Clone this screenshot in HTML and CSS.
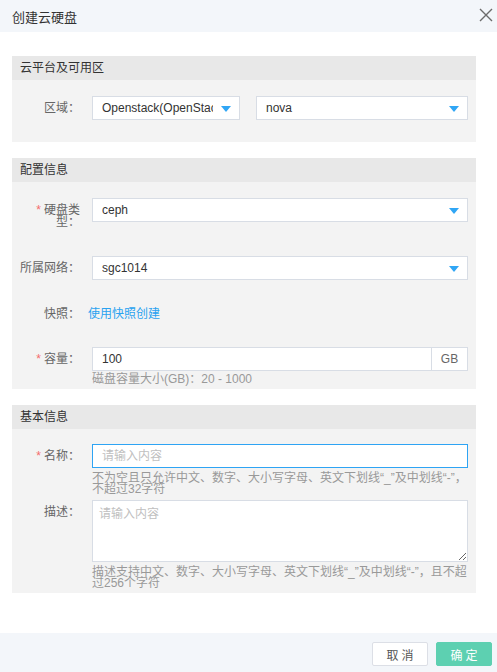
FILE: index.html
```html
<!DOCTYPE html>
<html lang="zh-CN">
<head>
<meta charset="utf-8">
<title>创建云硬盘</title>
<link rel="stylesheet" href="styles.css">
</head>
<body>
<div class="dialog">
  <div class="header">
    <span class="title">创建云硬盘</span>
    <svg class="close" width="14" height="14" viewBox="0 0 14 14"><path d="M1 1 L13 13 M13 1 L1 13" stroke="#6b6b6b" stroke-width="1.4" fill="none"/></svg>
  </div>
  <div class="body">
    <div class="section">
      <div class="sec-title">云平台及可用区</div>
      <div class="sec-body">
        <div class="row">
          <div class="label">区域：</div>
          <div class="select sel-cloud"><span class="sel-text">Openstack(OpenStack)</span><i class="caret"></i></div>
          <div class="select sel-zone"><span class="sel-text">nova</span><i class="caret"></i></div>
        </div>
      </div>
    </div>

    <div class="section">
      <div class="sec-title">配置信息</div>
      <div class="sec-body">
        <div class="row row-type">
          <div class="label"><span class="req">*</span>硬盘类型：</div>
          <div class="select grow"><span class="sel-text">ceph</span><i class="caret"></i></div>
        </div>
        <div class="row row-net">
          <div class="label">所属网络：</div>
          <div class="select grow"><span class="sel-text">sgc1014</span><i class="caret"></i></div>
        </div>
        <div class="row row-snap">
          <div class="label">快照：</div>
          <a class="link">使用快照创建</a>
        </div>
        <div class="row">
          <div class="label"><span class="req">*</span>容量：</div>
          <div class="field">
            <div class="input-group">
              <div class="input">100</div>
              <div class="addon">GB</div>
            </div>
            <div class="help help-cap">磁盘容量大小(GB)：20 - 1000</div>
          </div>
        </div>
      </div>
    </div>

    <div class="section">
      <div class="sec-title">基本信息</div>
      <div class="sec-body sec-basic">
        <div class="row row-name">
          <div class="label"><span class="req">*</span>名称：</div>
          <div class="field">
            <div class="input focus placeholder">请输入内容</div>
            <div class="help">不为空且只允许中文、数字、大小写字母、英文下划线“_”及中划线“-”，不超过32字符</div>
          </div>
        </div>
        <div class="row">
          <div class="label">描述：</div>
          <div class="field">
            <textarea class="textarea" placeholder="请输入内容"></textarea>
            <div class="help">描述支持中文、数字、大小写字母、英文下划线“_”及中划线“-”，且不超过256个字符</div>
          </div>
        </div>
      </div>
    </div>
  </div>
  <div class="footer">
    <button class="btn btn-cancel">取消</button>
    <button class="btn btn-ok">确定</button>
  </div>
</div>
</body>
</html>
```

FILE: styles.css
```css
* { box-sizing: border-box; }
html, body { margin: 0; padding: 0; }
body {
  font-family: "Liberation Sans", "Noto Sans CJK SC", sans-serif;
  font-size: 12px;
  color: #333;
  background: #fff;
}
.dialog {
  width: 497px;
  height: 672px;
  display: flex;
  flex-direction: column;
}
.header {
  height: 32px;
  flex: none;
  background: #f3f6fa;
  display: flex;
  align-items: center;
  justify-content: space-between;
  padding: 0 4px 0 12px;
}
.title { font-size: 13px; color: #333; }
.close { display: block; margin-top: -2px; }
.body {
  flex: 1;
  padding: 24px 21px 0 12px;
}
.section { margin-bottom: 16px; }
.sec-title {
  height: 24px;
  line-height: 24px;
  padding-left: 8px;
  background: #e8e8e8;
  color: #333;
}
.sec-body {
  background: #f3f3f3;
  padding: 16px 8px 22px 8px;
}
.sec-body.sec-basic { padding: 15px 8px 4px 8px; }
.sec-body:has(.help-cap) { padding-bottom: 4px; }
.row {
  display: flex;
  align-items: flex-start;
}
.label {
  width: 60px;
  flex: none;
  text-align: right;
  color: #666;
  line-height: 12px;
  padding-top: 6px;
  margin-right: 12px;
}
.req { color: #f56c6c; margin-right: 3px; }
.select {
  position: relative;
  height: 24px;
  line-height: 22px;
  background: #fff;
  border: 1px solid #d8dde5;
  padding: 0 26px 0 9px;
  color: #333;
  overflow: hidden;
}
.sel-text { display: block; white-space: nowrap; overflow: hidden; }
.caret {
  position: absolute;
  right: 8px;
  top: 9px;
  width: 0;
  height: 0;
  border-left: 5px solid transparent;
  border-right: 5px solid transparent;
  border-top: 6px solid #30a6f5;
}
.sel-cloud { width: 148px; margin-right: 16px; }
.sel-zone { flex: 1; }
.grow { flex: 1; }
.row-type { margin-bottom: 28px; }
.row-net { margin-bottom: 22px; }
.row-snap { margin-bottom: 21px; height: 24px; }
.link {
  color: #2aa2f0;
  line-height: 24px;
  margin-left: -4px;
  cursor: pointer;
}
.field { flex: 1; min-width: 0; }
.input-group { display: flex; }
.input {
  flex: 1;
  height: 24px;
  line-height: 22px;
  background: #fff;
  border: 1px solid #d8dde5;
  padding: 0 9px;
  color: #333;
}
.input.focus { border-color: #2ea4f4; }
.input.placeholder { color: #c0c0c0; }
.addon {
  width: 36px;
  height: 24px;
  line-height: 22px;
  border: 1px solid #d8dde5;
  border-left: none;
  background: #fff;
  text-align: center;
  color: #666;
}
.help {
  color: #999;
  line-height: 11px;
  margin-top: 5px;
}
.help-cap { margin-top: 3px; line-height: 11px; }
.row-name { margin-bottom: 5px; }
.textarea {
  display: block;
  width: 100%;
  height: 62px;
  border: 1px solid #d8dde5;
  background: #fff;
  padding: 5px 6px;
  font-family: "Liberation Sans", "Noto Sans CJK SC", sans-serif;
  font-size: 12px;
  line-height: 16px;
  color: #333;
  resize: vertical;
  outline: none;
  margin: 0;
}
.textarea::placeholder { color: #c0c0c0; }
.footer {
  height: 39px;
  flex: none;
  background: #f3f6fa;
  display: flex;
  justify-content: flex-end;
  align-items: flex-start;
  padding: 9px 5px 0 0;
  gap: 8px;
}
.btn {
  width: 56px;
  height: 24px;
  border-radius: 2px;
  font-family: "Liberation Sans", "Noto Sans CJK SC", sans-serif;
  font-size: 12px;
  letter-spacing: 3px;
  padding: 0 0 0 3px;
  cursor: pointer;
}
.btn-cancel {
  background: #fff;
  border: 1px solid #dcdfe6;
  color: #555;
}
.btn-ok {
  background: #5dd0b1;
  border: 1px solid #5dd0b1;
  color: #fff;
}
```
